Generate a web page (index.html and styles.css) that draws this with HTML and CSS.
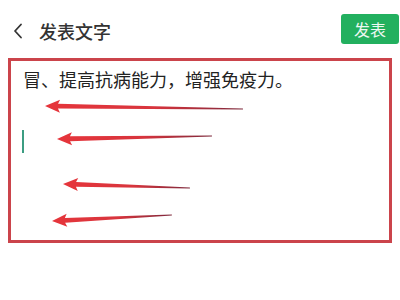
FILE: index.html
```html
<!DOCTYPE html>
<html lang="zh-CN">
<head>
<meta charset="utf-8">
<link rel="stylesheet" href="styles.css">
</head>
<body>
<div class="page">
  <header class="topbar">
    <div class="left">
      <svg class="back" width="12" height="16" viewBox="0 0 12 16"><polyline points="9,1.5 3,8 9,14.5" fill="none" stroke="#333" stroke-width="1.8" stroke-linecap="round" stroke-linejoin="round"/></svg>
      <span class="title">发表文字</span>
    </div>
    <button class="publish">发表</button>
  </header>
  <div class="editor">
    <p class="line">冒、提高抗病能力，增强免疫力。</p>
    <span class="cursor"></span>
    <svg class="arrows" viewBox="11 61 378 179" width="378" height="179">
      <defs>
        <linearGradient id="g" x1="0" y1="0" x2="1" y2="0">
          <stop offset="0" stop-color="#e6343b"/>
          <stop offset="0.55" stop-color="#d8343c"/>
          <stop offset="1" stop-color="#7e2a3c"/>
        </linearGradient>
        <filter id="soft" x="-5%" y="-50%" width="110%" height="200%"><feGaussianBlur stdDeviation="0.5"/></filter>
      </defs>
      <g fill="url(#g)" filter="url(#soft)">
        <polygon transform="translate(45 106) rotate(0.87)" points="0,0 15,-6.5 13,-2.4 198,-0.4 198,0.4 13,2.4 15,6.5"/>
        <polygon transform="translate(57 139) rotate(-1.1)" points="0,0 15,-6.5 13,-2.4 155,-0.4 155,0.4 13,2.4 15,6.5"/>
        <polygon transform="translate(63 184) rotate(1.8)" points="0,0 15,-6.5 13,-2.4 127,-0.4 127,0.4 13,2.4 15,6.5"/>
        <polygon transform="translate(52 221) rotate(-2.86)" points="0,0 15,-6.5 13,-2.4 120,-0.4 120,0.4 13,2.4 15,6.5"/>
      </g>
    </svg>
  </div>
</div>
</body>
</html>
```
FILE: styles.css
```css
html, body {
  margin: 0;
  padding: 0;
  background: #fff;
}
.page {
  width: 400px;
  height: 300px;
  font-family: "Noto Sans CJK SC", "Noto Sans", sans-serif;
  color: #222;
}
.topbar {
  height: 58px;
  display: flex;
  align-items: center;
  justify-content: space-between;
  padding: 0 1px 0 12px;
  box-sizing: border-box;
}
.left {
  display: flex;
  align-items: center;
  gap: 15px;
  padding-top: 3px;
}
.back {
  display: block;
}
.title {
  font-size: 18px;
  font-weight: 500;
  color: #333;
  line-height: 20px;
}
.publish {
  width: 58px;
  height: 30px;
  border: none;
  border-radius: 3px;
  background: #22b05f;
  color: #eef8f2;
  font-family: inherit;
  font-size: 16px;
  padding: 0;
  margin-top: -1px;
}
.editor {
  position: relative;
  margin: 0 8px;
  height: 185px;
  box-sizing: border-box;
  border: 3px solid #cb444b;
  padding: 7px 12px 0 12px;
}
.line {
  margin: 0;
  font-size: 18px;
  line-height: 22px;
  color: #222;
}
.cursor {
  display: block;
  width: 2px;
  height: 23px;
  margin: 40px 0 0 -1px;
  background: #3c9d82;
}
.arrows {
  position: absolute;
  left: 0;
  top: 0;
}
```
